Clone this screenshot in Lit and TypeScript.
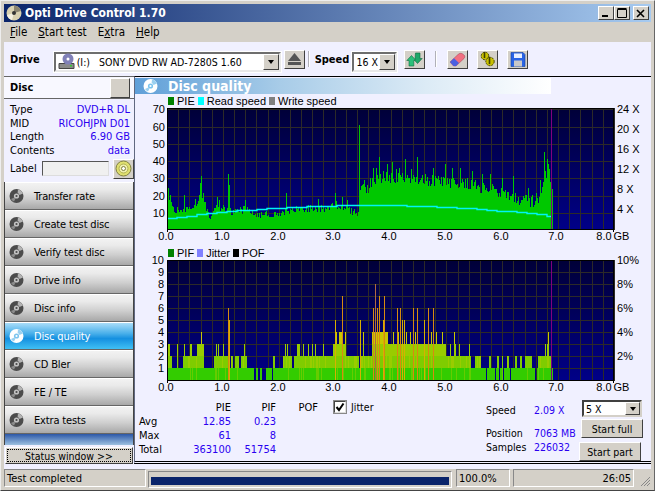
import { LitElement, html, css, svg } from "lit";
import { customElement } from "lit/decorators.js";

const pxPerGb = 55.75;
const PLOT_W = 447;

function rng(seed: number) {
  let s = seed;
  return () => {
    s = (s * 16807) % 2147483647;
    return s / 2147483647;
  };
}

/* PIE envelope: [GB, value] */
const env: [number, number][] = [
  [0, 18], [0.1, 13], [0.2, 9], [0.3, 11], [0.5, 14], [0.58, 16], [0.62, 20], [0.68, 15], [0.75, 7], [0.9, 13], [1.0, 12], [1.2, 10],
  [1.4, 12], [1.55, 9], [1.8, 9], [2.05, 9], [2.2, 11], [2.5, 12.5], [2.8, 12], [3.0, 15], [3.2, 12], [3.4, 9.5], [3.44, 10],
  [3.46, 23], [3.6, 24], [3.8, 30], [4.2, 30], [4.6, 29], [5.0, 28], [5.5, 26], [5.9, 22], [6.2, 19], [6.5, 16], [6.65, 18], [6.72, 24], [6.78, 32], [6.9, 27],
];
/* spikes by plot pixel */
const pieSpikes = new Map<number, number>([
  [1, 24], [3, 20], [10, 13], [17, 20], [28, 18], [32, 20], [33, 27], [34, 31], [36, 21], [50, 19], [52, 17], [61, 32], [62, 26], [78, 17], [119, 21],
  [151, 18], [168, 21], [175, 19], [180, 17], [192, 61], [195, 26], [197, 29], [203, 30], [206, 36], [209, 36], [212, 42], [216, 34], [220, 38], [225, 39], [229, 35], [232, 36],
  [238, 41], [244, 35], [250, 42], [266, 36], [278, 38], [285, 36], [293, 36], [305, 34], [315, 32], [323, 32], [335, 30], [346, 31], [361, 24], [373, 29], [377, 45], [380, 41], [381, 38], [382, 35],
]);

function envAt(gb: number) {
  for (let i = 1; i < env.length; i++) {
    if (gb <= env[i][0]) {
      const [a, b] = [env[i - 1], env[i]];
      return a[1] + ((b[1] - a[1]) * (gb - a[0])) / (b[0] - a[0]);
    }
  }
  return env[env.length - 1][1];
}

const PIE_END = 386;
function pieColumns() {
  const r = rng(4711);
  const cols: string[] = [];
  for (let x = 0; x < PIE_END; x++) {
    const gb = x / pxPerGb;
    const e = envAt(gb);
    const spread = gb > 3.47 ? 3.6 : 2.2;
    let v = e + (r() - 0.5) * spread * 2;
    const sp = pieSpikes.get(x);
    if (sp) v = Math.max(v, sp);
    const h = (Math.max(v, 5) * 120.5) / 70;
    cols.push(`M${x + 0.5} 121.5V${(121.5 - h).toFixed(1)}`);
  }
  return cols.join("");
}

/* read speed, stepped */
function readCurve() {
  const pts: string[] = [];
  for (let x = 0; x <= 384; x += 10) {
    const t = x / 384;
    const y = 110 - 13 * (1 - Math.pow((t - 0.52) / 0.52, 2));
    pts.push(`${pts.length ? "L" : "M"}${x} ${Math.round(y) + 0.5}H${Math.min(x + 10, 384)}`);
  }
  return pts.join("");
}

/* PIF chart: runs measured on the reference, in plot pixels */
function z1(zx: number) { return Math.round(zx / 3 - 27); }
function z2(zx: number) { return Math.round(233 + zx / 3); }
const lvl = new Array<number>(390).fill(0);
function setRun(a: number, b: number, v: number) {
  for (let i = a; i <= b && i < 390; i++) lvl[i] = Math.max(lvl[i], v);
}
([[80, 340], [348, 352], [360, 364], [378, 392], [398, 780]] as number[][]).forEach(([a, b]) => setRun(z1(a), z1(b), 1));
([[0, 255], [262, 282], [288, 292], [300, 305], [312, 328], [334, 376], [382, 386], [394, 402], [410, 412], [420, 455]] as number[][]).forEach(([a, b]) => setRun(z2(a), z2(b), 1));
([[80, 92], [130, 190], [222, 260], [273, 275], [285, 295], [303, 318], [400, 401], [430, 445], [448, 452], [462, 465], [468, 575], [578, 655], [660, 670], [672, 780]] as number[][]).forEach(([a, b]) => setRun(z1(a), z1(b), 2));
([[0, 185], [190, 210], [225, 240], [268, 270], [290, 295], [305, 307], [322, 324], [345, 347], [360, 362], [375, 392], [415, 450]] as number[][]).forEach(([a, b]) => setRun(z2(a), z2(b), 2));
[80, 83, 86, 112, 133, 150, 153, 170, 172, 174, 176, 178, 180, 182, 185, 188, 227, 235, 248, 313, 435, 442, 470, 474, 478, 490, 505, 515, 525, 548, 578, 582, 586, 590, 594, 598, 602, 606, 610, 612, 660, 668, 750, 755, 760, 765, 770, 775].forEach((z) => setRun(z1(z), z1(z), 3));
setRun(z1(695), z1(745), 3);
setRun(z1(745), z1(780), 3);
setRun(z2(0), z2(135), 3);
[150, 165, 178, 208, 435, 442].forEach((z) => setRun(z2(z), z2(z), 3));
[182, 585, 588, 598, 601, 604, 607, 615, 668, 760, 775].forEach((z) => setRun(z1(z), z1(z), 4));
setRun(z1(695), z1(740), 4);
[18, 30, 45, 52, 72, 85, 92, 100, 108, 125, 163, 445].forEach((z) => setRun(z2(z), z2(z), 4));
const tall: [number, number][] = [
  [z1(265), 6], [z1(268), 5], [z1(585), 5], [z1(607), 7], [z1(660), 5], [z1(700), 6], [z1(705), 8], [z1(712), 6], [z1(718), 7], [z1(733), 7], [z1(728), 5], [z1(772), 6],
  [z2(5), 5], [z2(12), 5], [z2(38), 6], [z2(52), 6], [z2(72), 5], [z2(85), 6], [z2(100), 6], [z2(0), 6],
];

function pifRects() {
  const band = ["", "#33cc00", "#7fcc00", "#99cc00", "#c8c800"];
  const r = rng(99);
  const out: unknown[] = [];
  for (let x = 0; x < 390; x++) {
    const l = lvl[x];
    for (let k = 1; k <= l; k++) {
      let c = band[k];
      if (k <= 2 && l >= 2 && r() < 0.18) c = k === 1 ? "#66cc00" : "#99cc00";
      out.push(svg`<rect x=${x} y=${120 - k * 12} width="1" height="12" fill=${c}></rect>`);
    }
  }
  tall.forEach(([x, v]) => {
    const c = v >= 8 ? "#b06a40" : v >= 6 ? "#d88a10" : "#d8b000";
    out.push(svg`<rect x=${x} y=${120 - v * 12} width="1" height=${v * 12} fill=${c}></rect>`);
  });
  return out;
}

const gridLines = (h: number, ys: number[]) => svg`
  ${Array.from({ length: 41 }, (_, i) => svg`<path d="M${Math.round(i * 11.175) + 0.5} 0V${h}"></path>`)}
  ${ys.map((y) => svg`<path d="M0 ${y + 0.5}H${PLOT_W}"></path>`)}
`;

const discIcon = (light = false, size = 16) => html`<svg class="ndisc" width=${size} height=${size} viewBox="0 0 16 16">
  <circle cx="7.5" cy="8" r="7" fill=${light ? "#fff" : "#4c4c4c"}></circle>
  <path d="M9 1.4A6.8 6.8 0 0 1 14 5.5L10.5 7A3.2 3.2 0 0 0 8.6 5Z" fill=${light ? "#9ad0f0" : "#b4b4b4"}></path>
  <path d="M5 13.5A6.5 6.5 0 0 1 2 11L5.2 9.6A3 3 0 0 0 6.4 10.8Z" fill=${light ? "#9ad0f0" : "#8c8c8c"}></path>
  <circle cx="7.5" cy="8" r="2.6" fill=${light ? "#7cc4ee" : "#c4c4c4"}></circle>
  <circle cx="7.5" cy="8" r="1.1" fill=${light ? "#fff" : "#4c4c4c"}></circle>
</svg>`;

const NAV = ["Transfer rate", "Create test disc", "Verify test disc", "Drive info", "Disc info", "Disc quality", "CD Bler", "FE / TE", "Extra tests"];

@customElement("app-root")
export class AppRoot extends LitElement {
  static styles = css`
    :host { display: block; width: 655px; height: 491px; overflow: hidden; background: #d4d0c8; font-family: "DejaVu Sans Condensed", "DejaVu Sans", sans-serif; font-size: 11px; color: #000; }
    * { box-sizing: border-box; }
    .frame { width: 655px; height: 491px; display: flex; flex-direction: column; border-top: 1px solid #eee; border-left: 1px solid #eee; border-right: 1px solid #666; border-bottom: 1px solid #444; padding: 3px; }
    .title { height: 18px; flex: none; display: flex; align-items: center; background: linear-gradient(90deg, #0a246a, #a6caf0); color: #fff; font: bold 12px "DejaVu Sans Condensed", "DejaVu Sans", sans-serif; padding-left: 2px; gap: 3px; }
    .title .txt { flex: 1; white-space: nowrap; }
    .wbtn { width: 16px; height: 14px; background: #d4d0c8; border: 1px solid; border-color: #fff #404040 #404040 #fff; display: flex; align-items: center; justify-content: center; }
    .wbtn.min { margin-right: -3px; }
    .wbtn.last { margin: 0 2px 0 0; }
    .menu { height: 20px; flex: none; display: flex; align-items: center; font-size: 11.5px; padding-left: 6px; gap: 11px; }
    .tool { height: 34px; flex: none; background: #f0f0ff; display: flex; align-items: center; padding-left: 6px; }
    .lbl { font-weight: bold; font-size: 11px; }
    .combo { display: flex; align-items: center; background: #fff; border: 2px solid; border-color: #6e6e6e #e8e8e8 #e8e8e8 #6e6e6e; outline: 1px solid #fff; height: 20px; }
    .tool .combo { margin-top: 5px; }
    .combo .arrow { width: 16px; height: 16px; background: #d4d0c8; border: 1px solid; border-color: #fff #404040 #404040 #fff; display: flex; align-items: center; justify-content: center; flex: none; }
    .arrow::after { content: ""; border: 3.5px solid transparent; border-top: 4px solid #000; border-bottom: 0; }
    .combo .val { flex: 1; display: flex; align-items: center; gap: 2px; padding-left: 2px; white-space: nowrap; font-size: 10.5px; }
    .drive { width: 227px; margin-left: 14px; }
    .tbtn { width: 21px; height: 19px; background: #d4d0c8; border: 1px solid; border-color: #fff #404040 #404040 #fff; display: flex; align-items: center; justify-content: center; flex: none; }
    .sep { width: 2px; height: 16px; background: #b0b0b8; border-right: 1px solid #fff; flex: none; }
    .main { flex: 1; display: flex; min-height: 0; background: #f0f0ff; }
    .side { width: 130px; flex: none; display: flex; flex-direction: column; }
    .dischead { height: 23px; flex: none; display: flex; align-items: flex-end; justify-content: space-between; font-weight: bold; border-top: 1px solid #666; border-bottom: 1px solid #666; padding: 0 0 0 6px; background: #f8f8ff; }
    .dischead span { align-self: center; }
    .dischead .b { width: 20px; height: 20px; background: #d4d0c8; border: 1px solid; border-color: #fff #404040 #404040 #fff; margin-right: 4px; }
    .info { display: grid; grid-template-columns: 1fr auto; padding: 4px 0 0 6px; grid-auto-rows: 13.5px; align-items: center; font-size: 11px; flex: none; height: 59px; }
    .info .v { text-align: right; color: #2a00f0; padding-right: 4px; }
    .labelrow { display: flex; align-items: center; height: 21px; padding-left: 6px; flex: none; }
    .labelrow .in { width: 67px; height: 15px; margin-left: 5px; border: 1px solid; border-color: #555 #ddd #ddd #555; background: #f0f0f0; }
    .labelrow .cd { width: 21px; height: 20px; background: #d4d0c8; border: 1px solid; border-color: #fff #404040 #404040 #fff; margin-left: 4px; display: flex; align-items: center; justify-content: center; }
    .nav { margin-top: 3px; display: flex; flex-direction: column; flex: none; border-right: 1px solid #444; border-left: 1px solid #444; }
    .nb { height: 28px; flex: none; display: flex; align-items: center; gap: 9px; padding-left: 4px; font-size: 11px; letter-spacing: -0.15px; background: linear-gradient(#f2f2f2, #eaeaea 25%, #cfcfcf 60%, #a8a8a8); border-top: 1px solid #fff; border-bottom: 1px solid #666; }
    .nb.on { background: linear-gradient(#a8dcf8, #4ab0ea 40%, #1590e0 60%, #40c0f4); color: #fff; }
    .strip { height: 11px; flex: none; background: linear-gradient(#2c58a8, #9cc0e0); border-right: 1px solid #444; border-left: 1px solid #444; }
    .statusbtn { margin: 2px 1px 0 1px; height: 17px; flex: none; background: #d4d0c8; border: 1px solid; border-color: #fff #404040 #404040 #fff; padding: 1px; font-size: 10.5px; }
    .statusbtn div { height: 100%; border: 1px dotted #000; display: flex; align-items: center; justify-content: center; }
    .right { flex: 1; min-width: 0; display: flex; flex-direction: column; border-left: 1px solid #606880; border-top: 1px solid #000; border-bottom: 3px double #000; margin-bottom: 5px; }
    .qhead { margin-top: 1px; width: 416px; height: 16px; flex: none; background: linear-gradient(90deg, #5f9fd8, #a8cce8 35%, #dcebf6 70%, #fff); display: flex; align-items: center; color: #fff; font: bold 14px "DejaVu Sans Condensed", "DejaVu Sans", sans-serif; gap: 9px; padding-left: 8px; }
    .legend { height: 14px; display: flex; align-items: center; font: 11px "Liberation Sans", sans-serif; padding-left: 33px; flex: none; }
    .legend i { width: 6px; height: 8px; display: inline-block; margin-right: 3px; }
    .legend span { display: flex; align-items: center; margin-right: 3px; }
    svg text { font: 11px "Liberation Sans", sans-serif; fill: #000; }
    svg.chart { display: block; flex: none; overflow: visible; }
    .stats { flex: 1; display: flex; min-height: 0; font-size: 11px; }
    .tbl { display: grid; grid-template-columns: 50px 42px 45px 42px auto; grid-auto-rows: 14px; align-items: center; padding: 3px 0 0 4px; height: fit-content; width: 351px; flex: none; }
    .tbl .r { text-align: right; }
    .tbl .b { color: #2a00f0; }
    .jit { display: flex; align-items: center; gap: 5px; font-size: 10.5px; padding-left: 16px; }
    .chk { width: 12px; height: 12px; background: #fff; border: 1px solid; border-color: #444 #ddd #ddd #444; outline: 1px solid #888; display: flex; align-items: center; justify-content: center; }
    .rs { width: 96px; flex: none; display: grid; grid-template-columns: 48px 48px; grid-template-rows: 14px 9px 14px 14px; padding-top: 7px; align-content: start; white-space: nowrap; font-size: 10.5px; }
    .rs .b { color: #2a00f0; }
    .btns { display: flex; flex-direction: column; width: 64px; padding-top: 3px; }
    .btns .combo { width: 60px; height: 17px; border-color: #404040 #d4d0c8 #d4d0c8 #404040; outline: none; }
    .btns .arrow { height: 13px; width: 15px; }
    .pb { height: 19px; width: 62px; flex: none; background: #d4d0c8; border: 1px solid; border-color: #fff #404040 #404040 #fff; display: flex; align-items: center; justify-content: center; font-size: 10.5px; }
    .pb.full { margin: 2px 0 0 -1px; }
    .pb.part { margin: 4px 0 0 -3px; }
    .status { height: 18px; flex: none; display: flex; font-size: 11px; }
    .cell { height: 18px; border: 1px solid; border-color: #888 #fff #fff #888; display: flex; align-items: center; padding: 0 2px; white-space: nowrap; flex: none; }
    .barwrap { width: 304px; margin-left: 2px; padding: 5px 2px 2px; border-width: 1px; height: 17px; margin-top: 2px; }
    .barwrap div { width: 100%; height: 100%; background: #0a246a; }
    .grip { width: 17px; flex: none; display: flex; align-items: flex-end; justify-content: flex-end; }
  `;

  renderChart1() {
    const ticksX = [0, 1, 2, 3, 4, 5, 6, 7];
    const leftY = [70, 60, 50, 40, 30, 20, 10];
    const rightY = [24, 20, 16, 12, 8, 4];
    return html`<svg class="chart" width="516" height="138" viewBox="0 0 516 138">
      <defs><linearGradient id="bg" x1="0" x2="0" y1="0" y2="1"><stop offset="0" stop-color="#000038"></stop><stop offset="1" stop-color="#000088"></stop></linearGradient></defs>
      <g transform="translate(32,0)">
        <rect width=${PLOT_W} height="122" fill="url(#bg)"></rect>
        <g stroke="#2c2a28" stroke-width="1" shape-rendering="crispEdges" fill="none">${gridLines(122, [1, 19, 36, 53, 70, 88, 105])}</g>
        <path d=${pieColumns()} stroke="#00c800" stroke-width="1" shape-rendering="crispEdges" fill="none"></path>
        <path d=${readCurve()} stroke="#00f4f4" stroke-width="1.4" fill="none"></path>
        <path d="M384.5 0V122" stroke="#800080" fill="none" shape-rendering="crispEdges"></path>
        <path d="M0.5 0V124M0 0.5H${PLOT_W}M0 121.5H${PLOT_W}M${PLOT_W - 0.5} 0V124" stroke="#000" fill="none" shape-rendering="crispEdges"></path>
        ${ticksX.map((i) => svg`<text x=${Math.round(i * pxPerGb) - 1} y="132" text-anchor="middle">${i}.0</text>`)}
        <text x="437" y="132" text-anchor="middle">8.0</text>
        <text x="454.5" y="132" text-anchor="middle">GB</text>
      </g>
      ${leftY.map((v, i) => svg`<text x="30" y=${[5, 23, 40, 57, 74, 92, 109][i]} text-anchor="end">${v}</text>`)}
      ${rightY.map((v, i) => svg`<text x="482" y=${5 + i * 20}>${v} X</text>`)}
    </svg>`;
  }

  renderChart2() {
    const ticksX = [0, 1, 2, 3, 4, 5, 6, 7];
    const ys = [0, 12, 24, 36, 48, 60, 72, 84, 96, 108];
    return html`<svg class="chart" width="516" height="137" viewBox="0 0 516 137">
      <g transform="translate(32,0)">
        <rect width=${PLOT_W} height="121" fill="url(#bg)"></rect>
        <g stroke="#2c2a28" stroke-width="1" shape-rendering="crispEdges" fill="none">${gridLines(121, ys)}</g>
        <g shape-rendering="crispEdges">${pifRects()}</g>
        <path d="M384.5 0V120" stroke="#800080" fill="none" shape-rendering="crispEdges"></path>
        <path d="M0.5 0V123M0 0.5H${PLOT_W}M0 120.5H${PLOT_W}M${PLOT_W - 0.5} 0V123" stroke="#000" fill="none" shape-rendering="crispEdges"></path>
        ${ticksX.map((i) => svg`<text x=${Math.round(i * pxPerGb) - 1} y="131" text-anchor="middle">${i}.0</text>`)}
        <text x="437" y="131" text-anchor="middle">8.0</text>
        <text x="454.5" y="131" text-anchor="middle">GB</text>
      </g>
      ${[10, 9, 8, 7, 6, 5, 4, 3, 2, 1].map((v, i) => svg`<text x="29" y=${4 + i * 12} text-anchor="end">${v}</text>`)}
      ${[10, 8, 6, 4, 2].map((v, i) => svg`<text x="482" y=${4 + i * 24}>${v}%</text>`)}
    </svg>`;
  }

  render() {
    return html`<div class="frame">
      <div class="title">
        <svg width="16" height="16" viewBox="0 0 16 16"><circle cx="8" cy="8" r="7.5" fill="#d8d0b0"></circle><path d="M8 .5A7.5 7.5 0 0 1 15 6L8 8Z" fill="#8a8470"></path><path d="M1 10A7.5 7.5 0 0 0 6 15L8 8Z" fill="#f4f0e0"></path><circle cx="8" cy="8" r="2" fill="#333"></circle></svg>
        <span class="txt">Opti Drive Control 1.70</span>
        <div class="wbtn min"><svg width="10" height="8"><rect x="1" y="6" width="6" height="2"></rect></svg></div>
        <div class="wbtn"><svg width="10" height="10"><path d="M.5 1.5H9.5V9.5H.5Z M.5 .5H9.5" fill="none" stroke="#000"></path></svg></div>
        <div class="wbtn last"><svg width="10" height="9"><path d="M1 1L8 8M8 1L1 8" stroke="#000" stroke-width="1.6"></path></svg></div>
      </div>
      <div class="menu"><span><u>F</u>ile</span><span><u>S</u>tart test</span><span>E<u>x</u>tra</span><span><u>H</u>elp</span></div>
      <div class="tool">
        <span class="lbl">Drive</span>
        <div class="combo drive"><div class="val">
          <svg width="17" height="17" viewBox="0 0 17 17"><path d="M1 10.5H16V15.5H1Z" fill="#8a8a8a" stroke="#444"></path><circle cx="10" cy="6" r="5.5" fill="#8080b8"></circle><circle cx="10" cy="6" r="1.5" fill="#fff"></circle><rect x="12" y="12" width="2" height="1.5" fill="#3c3"></rect></svg>
          <span>(I:)&nbsp;&nbsp; SONY DVD RW AD-7280S 1.60</span></div><div class="arrow"></div></div>
        <div class="tbtn" style="margin-left:3px"><svg width="17" height="15" viewBox="0 0 17 15"><path d="M8.5 1L15 9H2Z" fill="#555"></path><rect x="2" y="10" width="13" height="3" fill="#555"></rect></svg></div>
        <div class="sep" style="margin-left:3px"></div>
        <span class="lbl" style="margin-left:5px">Speed</span>
        <div class="combo" style="width:45px;margin-left:3px"><div class="val">16 X</div><div class="arrow"></div></div>
        <div class="tbtn" style="margin-left:7px"><svg width="17" height="15" viewBox="0 0 17 15"><path d="M3 14V8.5H.8L5.5 3.5L10 8.5H7.8V14Z" fill="#2cc07a" stroke="#0e6a3c" stroke-width=".6"></path><path d="M9.5 1H14V6.5H16.2L11.5 11.5L9 8.8V6.5Z" fill="#1fa868" stroke="#0e6a3c" stroke-width=".6"></path></svg></div>
        <div class="sep" style="margin-left:10px"></div>
        <div class="tbtn" style="margin-left:10px"><svg width="17" height="15" viewBox="0 0 17 15"><path d="M1 10L9 2.5Q11 .5 13 1.5L15.5 3.5Q16.5 5 15 6.5L7 14H4.5Z" fill="#f27080" stroke="#a04050" stroke-width=".5"></path><path d="M1 10L5 6.2L10 11L7 14H4.5Z" fill="#4a60e0"></path></svg></div>
        <div class="tbtn" style="margin-left:9px"><svg width="17" height="16" viewBox="0 0 17 16" fill="#c8c000" stroke="#404000" stroke-width="1"><circle cx="6" cy="5" r="3.8" stroke-dasharray="2 1"></circle><circle cx="11" cy="10.5" r="4.2" stroke-dasharray="2 1"></circle><path d="M5.5 1V7M10.5 6V13" stroke-width="1.6"></path></svg></div>
        <div class="tbtn" style="margin-left:9px"><svg width="16" height="15" viewBox="0 0 16 15"><path d="M1 .5H13L15 2.5V14.5H1Z" fill="#2a64e4" stroke="#1040a0" stroke-width=".6"></path><rect x="4" y="1.5" width="8" height="4.5" fill="#e8f0ff"></rect><rect x="4" y="8.5" width="8" height="6" fill="#c8c8c8"></rect></svg></div>
      </div>
      <div class="main">
        <div class="side">
          <div class="dischead"><span>Disc</span><div class="b"></div></div>
          <div class="info">
            <span>Type</span><span class="v">DVD+R DL</span>
            <span>MID</span><span class="v">RICOHJPN D01</span>
            <span>Length</span><span class="v">6.90 GB</span>
            <span>Contents</span><span class="v">data</span>
          </div>
          <div class="labelrow"><span>Label</span><div class="in"></div><div class="cd"><svg width="17" height="17" viewBox="0 0 17 17"><circle cx="8.5" cy="8.5" r="7.5" fill="#e0e070" stroke="#808040"></circle><circle cx="8.5" cy="8.5" r="4.5" fill="#f0f0b0" stroke="#b0b050"></circle><circle cx="8.5" cy="8.5" r="2" fill="#fff" stroke="#808040"></circle></svg></div></div>
          <div class="nav">
            ${NAV.map((n) => html`<div class="nb ${n === "Disc quality" ? "on" : ""}">${discIcon(n === "Disc quality")}<span>${n}</span></div>`)}
          </div>
          <div class="strip"></div>
          <div class="statusbtn"><div>Status window &gt;&gt;</div></div>
        </div>
        <div class="right">
          <div class="qhead">${discIcon(true)}<span>Disc quality</span></div>
          <div class="legend"><span><i style="background:#008000"></i>PIE</span><span><i style="background:#00ffff"></i>Read speed</span><span><i style="background:#808080"></i>Write speed</span></div>
          ${this.renderChart1()}
          <div class="legend"><span><i style="background:#008000"></i>PIF</span><span><i style="background:#8080ff"></i>Jitter</span><span><i style="background:#000"></i>POF</span></div>
          ${this.renderChart2()}
          <div class="stats">
            <div class="tbl">
              <span></span><span class="r">PIE</span><span class="r">PIF</span><span class="r">POF</span><div class="jit"><div class="chk"><svg width="10" height="10"><path d="M1.5 5L4 8L8.5 1.5" fill="none" stroke="#000" stroke-width="2"></path></svg></div>Jitter</div>
              <span>Avg</span><span class="r b">12.85</span><span class="r b">0.23</span><span></span><span></span>
              <span>Max</span><span class="r b">61</span><span class="r b">8</span><span></span><span></span>
              <span>Total</span><span class="r b">363100</span><span class="r b">51754</span><span></span><span></span>
            </div>
            <div class="rs">
              <span>Speed</span><span class="b">2.09 X</span><span></span><span></span>
              <span>Position</span><span class="b">7063 MB</span>
              <span>Samples</span><span class="b">226032</span>
            </div>
            <div class="btns">
              <div class="combo"><div class="val">5 X</div><div class="arrow"></div></div>
              <div class="pb full">Start full</div>
              <div class="pb part">Start part</div>
            </div>
          </div>
        </div>
      </div>
      <div class="status">
        <div class="cell" style="width:142px">Test completed</div>
        <div class="cell barwrap"><div></div></div>
        <div class="cell" style="width:54px;margin-left:4px">100.0%</div>
        <div class="cell" style="width:121px;margin-left:3px;justify-content:flex-end">26:05</div>
        <div class="grip"><svg width="12" height="12"><path d="M11 2L2 11M11 5L5 11M11 8L8 11" stroke="#888" fill="none"></path></svg></div>
      </div>
    </div>`;
  }
}
